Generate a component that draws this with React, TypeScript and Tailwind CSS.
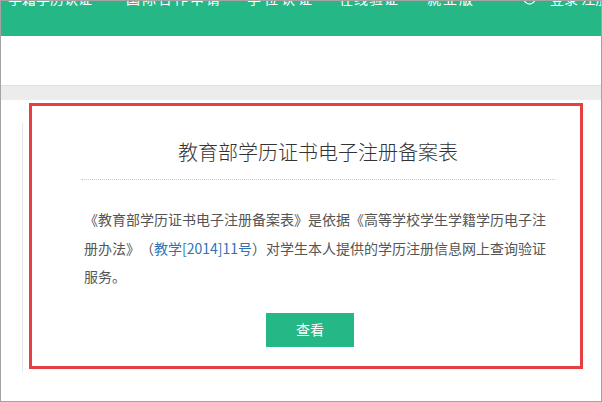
import React from "react";

const navItems = [
  { label: "学籍学历认证", className: "ml-[7px]" },
  { label: "国际合作申请", className: "ml-[34px] tracking-[2px]" },
  { label: "学位认证", className: "ml-[25px] tracking-[3px]" },
  { label: "在线验证", className: "ml-[24px] tracking-[1px]" },
  { label: "就业版", className: "ml-[28px] tracking-[2px]" },
];

function UserCircle() {
  return (
    <svg width="13" height="13" viewBox="0 0 14 14" fill="none" stroke="white" strokeWidth="1.2">
      <circle cx="7" cy="7" r="6" />
      <circle cx="7" cy="5.5" r="2.2" />
    </svg>
  );
}

export default function App() {
  return (
    <div
      className="w-[602px] h-[402px] border border-[#a3a3a3] bg-white overflow-hidden"
      style={{ fontFamily: '"Noto Sans CJK SC", "Noto Sans", sans-serif' }}
    >
      {/* top nav, scrolled so only the bottom of the links remains */}
      <header className="h-[35px] bg-[#25b886] overflow-hidden">
        <nav className="-mt-[10px] flex items-start whitespace-nowrap text-[14px] leading-[14px] text-white">
          {navItems.map((item) => (
            <span key={item.label} className={`shrink-0 ${item.className}`}>
              {item.label}
            </span>
          ))}
          <span className="ml-[48px] mt-[1px] shrink-0">
            <UserCircle />
          </span>
          <span className="ml-[14px] shrink-0">登录 注册</span>
        </nav>
      </header>

      <div className="h-[49px] bg-white" />
      <div className="h-[15px] bg-[#ececec] border-t border-[#e0e0e0]" />

      <main className="flex pt-[3px] pl-[21px]">
        <div className="mt-[20px] h-[249px] w-px bg-[#e4e9ef]" />
        <section className="ml-[6px] w-[554px] h-[266px] border-[3px] border-[#e5403f] bg-white">
          <div className="ml-[49px] w-[474px] pt-[32px]">
            <h1 className="text-center text-[20px] font-light leading-[28px] text-[#333]">
              教育部学历证书电子注册备案表
            </h1>
            <div className="mt-[13px] border-t border-dotted border-[#c8c8c8]" />
            <p className="mt-[25px] px-[3px] text-[14px] leading-[28.5px] text-[#555] [text-spacing-trim:space-all]">
              《教育部学历证书电子注册备案表》是依据《高等学校学生学籍学历电子注册办法》（
              <a className="text-[#2f73b5]">教学[2014]11号</a>
              ）对学生本人提供的学历注册信息网上查询验证服务。
            </p>
            <button className="mt-[22px] ml-[185px] h-[34px] w-[88px] bg-[#25b886] text-[14px] text-white">
              查看
            </button>
          </div>
        </section>
      </main>
    </div>
  );
}
